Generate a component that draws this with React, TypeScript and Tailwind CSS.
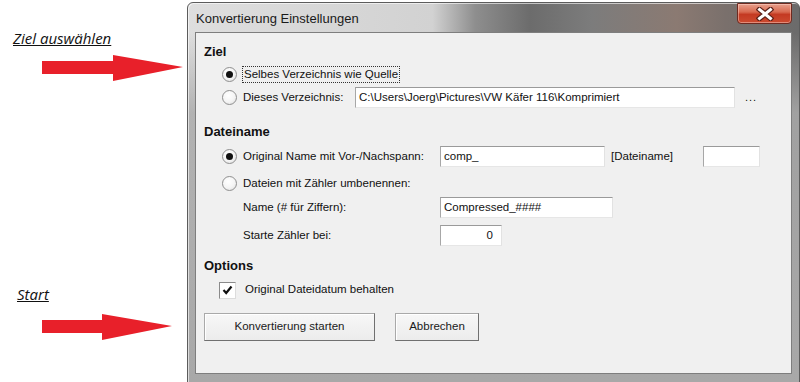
import React from "react";

const ui = "font-['Liberation_Sans',Arial,sans-serif]";

function Radio({ checked }: { checked?: boolean }) {
  return (
    <span className="w-[15px] h-[15px] rounded-full border border-[#8f8f8f] bg-[radial-gradient(circle_at_40%_35%,#ffffff_0%,#f4f4f4_55%,#d9d9d9_100%)] flex items-center justify-center shrink-0">
      {checked && <span className="w-[7px] h-[7px] rounded-full bg-[#111]" />}
    </span>
  );
}

function Field({ value, className, right }: { value: string; className: string; right?: boolean }) {
  return (
    <div
      className={`h-[21px] bg-white border border-t-[#9a9a9a] border-l-[#a7a7a7] border-r-[#e2e2e2] border-b-[#e6e6e6] flex items-center px-[3px] text-[11.5px] text-[#111] ${
        right ? "justify-end pr-[8px]" : ""
      } ${className}`}
    >
      {value}
    </div>
  );
}

function Button({ label, className }: { label: string; className: string }) {
  return (
    <div
      className={`h-[28px] flex items-center justify-center border border-[#a9a9a9] border-r-[#707070] border-b-[#707070] bg-[linear-gradient(#f7f7f7,#ececec)] shadow-[inset_1px_1px_0_#ffffff] text-[11.5px] text-[#1a1a1a] ${className}`}
    >
      {label}
    </div>
  );
}

function Arrow({ width }: { width: number }) {
  const head = 70;
  return (
    <svg width={width} height={26} viewBox={`0 0 ${width} 26`}>
      <polygon
        points={`0,6 ${width - head},6 ${width - head},0 ${width},12 ${width - head},26 ${width - head},19 0,19`}
        fill="#e8202a"
      />
    </svg>
  );
}

export default function App() {
  return (
    <div className="w-[800px] h-[382px] bg-white flex overflow-hidden">
      {/* annotations */}
      <div className="w-[187px] shrink-0 flex flex-col pt-[28px] pl-[13px] font-['Open_Sans',sans-serif] italic text-[15px] text-[#111]">
        <div className="leading-[20px] underline">Ziel auswählen</div>
        <div className="mt-[7px] ml-[29px]">
          <Arrow width={141} />
        </div>
        <div className="mt-[203px] ml-[4px] leading-[20px] underline">Start</div>
        <div className="mt-[10px] ml-[29px]">
          <Arrow width={130} />
        </div>
      </div>

      {/* window */}
      <div className="mt-[2px] w-[613px] h-[381px] shrink-0 rounded-t-[6px] border border-[#5c5c5c] flex flex-col px-[7px] pb-[8px] bg-[linear-gradient(to_bottom,transparent_0px,transparent_30px,rgba(170,170,170,0.85)_110px,#a8a8a8_100%),linear-gradient(to_right,#dedede_0%,#d2d2d2_40%,#8e8e8e_47%,#6c6c6c_56%,#7c7c7c_66%,#8b7a72_80%,#7a706c_88%,#6b6b6b_100%)] shadow-[inset_1px_1px_0_rgba(255,255,255,0.6)]">
        <div className="h-[29px] flex items-start justify-between">
          <div className={`${ui} text-[13px] text-[#1a1a1a] mt-[8px] ml-[1px] leading-[16px]`}>
            Konvertierung Einstellungen
          </div>
          <div className="w-[55px] h-[21px] rounded-b-[4px] border border-[#6e2a20] bg-[linear-gradient(#e8a08c_0%,#d86a50_42%,#c43a22_55%,#cc4b30_100%)] shadow-[inset_0_0_0_1px_rgba(255,220,210,0.45)] flex items-center justify-center">
            <svg width="18" height="14" viewBox="0 0 18 14">
              <path d="M3.5 2.5 L14.5 11.5 M14.5 2.5 L3.5 11.5" stroke="#5a2018" strokeWidth="5.4" strokeLinecap="square" />
              <path d="M3.5 2.5 L14.5 11.5 M14.5 2.5 L3.5 11.5" stroke="#ffffff" strokeWidth="3" strokeLinecap="square" />
            </svg>
          </div>
        </div>

        {/* client */}
        <div className={`flex-1 bg-[#f0f0f0] border border-[#7e7e7e] flex flex-col pt-[9px] ${ui} text-[11.5px] text-[#111]`}>
          <div className="h-[20px] flex items-center pl-[8px] font-bold text-[13px]">Ziel</div>
          <div className="h-[23px] mt-[1px] flex items-center pl-[26px]">
            <Radio checked />
            <span className="ml-[6px] px-[1px] leading-[15px] outline-1 outline-dotted outline-[#333]">
              Selbes Verzeichnis wie Quelle
            </span>
          </div>
          <div className="h-[23px] flex items-center pl-[26px]">
            <Radio />
            <span className="ml-[6px] w-[112px]">Dieses Verzeichnis:</span>
            <Field value="C:\Users\Joerg\Pictures\VW Käfer 116\Komprimiert" className="w-[380px]" />
            <span className="ml-[10px] text-[11px] tracking-[1px]">...</span>
          </div>

          <div className="h-[21px] mt-[12px] flex items-center pl-[8px] font-bold text-[13px]">Dateiname</div>
          <div className="h-[23px] mt-[3px] flex items-center pl-[26px]">
            <Radio checked />
            <span className="ml-[6px] w-[197px]">Original Name mit Vor-/Nachspann:</span>
            <Field value="comp_" className="w-[165px]" />
            <span className="ml-[6px] w-[92px]">[Dateiname]</span>
            <Field value="" className="w-[57px]" />
          </div>
          <div className="h-[23px] mt-[4px] flex items-center pl-[26px]">
            <Radio />
            <span className="ml-[6px]">Dateien mit Zähler umbenennen:</span>
          </div>
          <div className="h-[23px] mt-[1px] flex items-center pl-[47px]">
            <span className="w-[197px]">Name (# für Ziffern):</span>
            <Field value="Compressed_####" className="w-[173px]" />
          </div>
          <div className="h-[23px] mt-[5px] flex items-center pl-[47px]">
            <span className="w-[197px]">Starte Zähler bei:</span>
            <Field value="0" right className="w-[62px]" />
          </div>

          <div className="h-[20px] mt-[9px] flex items-center pl-[8px] font-bold text-[13px]">Options</div>
          <div className="h-[22px] mt-[3px] flex items-center pl-[23px]">
            <span className="w-[17px] h-[17px] bg-white border border-[#8a8a8a] border-r-[#dcdcdc] border-b-[#dcdcdc] flex items-center justify-center">
              <svg width="11" height="10" viewBox="0 0 11 10">
                <path d="M1.5 5 L4.2 8 L9.5 1.5" stroke="#111" strokeWidth="2.2" fill="none" />
              </svg>
            </span>
            <span className="ml-[9px]">Original Dateidatum behalten</span>
          </div>

          <div className="mt-[12px] flex items-center pl-[8px]">
            <Button label="Konvertierung starten" className="w-[171px]" />
            <Button label="Abbrechen" className="w-[84px] ml-[20px]" />
          </div>
        </div>
      </div>
    </div>
  );
}
